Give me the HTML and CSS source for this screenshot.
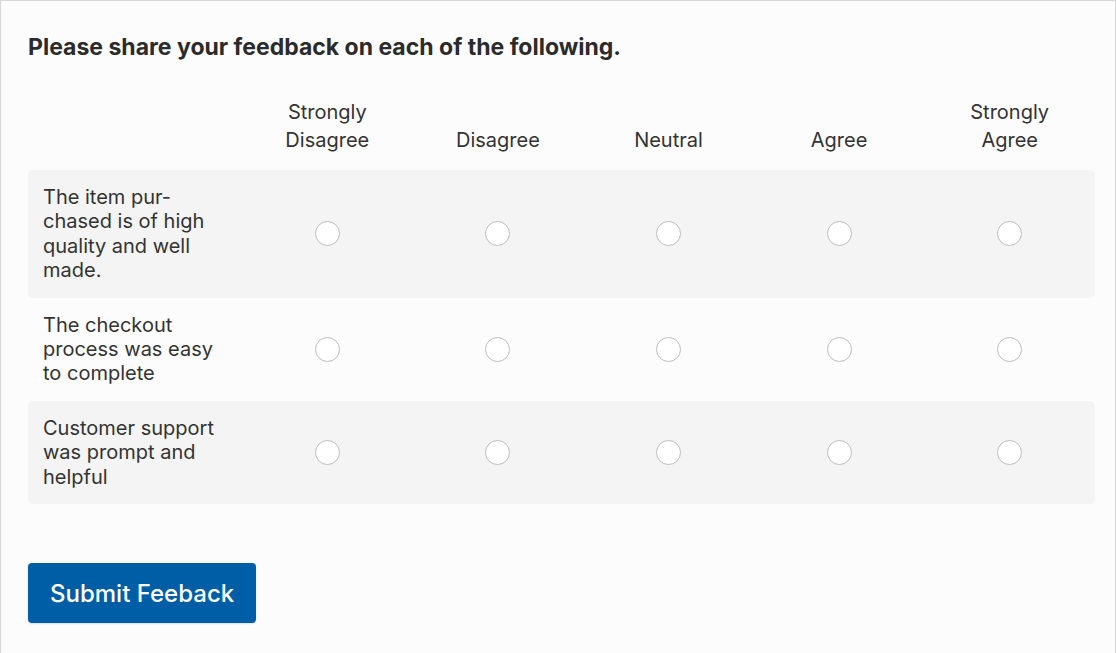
FILE: index.html
```html
<!DOCTYPE html>
<html lang="en">
<head>
<meta charset="utf-8">
<title>Feedback</title>
<link rel="stylesheet" href="styles.css">
</head>
<body>
<main class="page">
  <form class="survey">
    <h1 class="title">Please share your feedback on each of the following.</h1>
    <div class="matrix">
      <div class="head-cell head-empty"></div>
      <div class="head-cell">Strongly<br>Disagree</div>
      <div class="head-cell">Disagree</div>
      <div class="head-cell">Neutral</div>
      <div class="head-cell">Agree</div>
      <div class="head-cell">Strongly<br>Agree</div>

      <div class="row shaded">
        <div class="label">The item pur&shy;chased is of high quality and well made.</div>
        <div class="opt"><input type="radio" name="q1" class="radio"></div>
        <div class="opt"><input type="radio" name="q1" class="radio"></div>
        <div class="opt"><input type="radio" name="q1" class="radio"></div>
        <div class="opt"><input type="radio" name="q1" class="radio"></div>
        <div class="opt"><input type="radio" name="q1" class="radio"></div>
      </div>

      <div class="row">
        <div class="label">The checkout process was easy to complete</div>
        <div class="opt"><input type="radio" name="q2" class="radio"></div>
        <div class="opt"><input type="radio" name="q2" class="radio"></div>
        <div class="opt"><input type="radio" name="q2" class="radio"></div>
        <div class="opt"><input type="radio" name="q2" class="radio"></div>
        <div class="opt"><input type="radio" name="q2" class="radio"></div>
      </div>

      <div class="row shaded">
        <div class="label">Customer support was prompt and helpful</div>
        <div class="opt"><input type="radio" name="q3" class="radio"></div>
        <div class="opt"><input type="radio" name="q3" class="radio"></div>
        <div class="opt"><input type="radio" name="q3" class="radio"></div>
        <div class="opt"><input type="radio" name="q3" class="radio"></div>
        <div class="opt"><input type="radio" name="q3" class="radio"></div>
      </div>
    </div>
    <button type="button" class="submit">Submit Feeback</button>
  </form>
</main>
</body>
</html>
```

FILE: styles.css
```css
html, body {
  margin: 0;
  padding: 0;
  height: 100%;
  background: #fcfcfc;
}

body {
  font-family: Inter, "Liberation Sans", sans-serif;
  color: #333;
}

.page {
  box-sizing: border-box;
  min-height: 100%;
  border: 1px solid #d6d6d6;
  border-bottom: none;
  padding: 32px 20px 0 27px;
  background: #fcfcfc;
}

.survey {
  display: flex;
  flex-direction: column;
  align-items: flex-start;
}

.title {
  margin: 0;
  font-size: 23px;
  line-height: 28px;
  font-weight: 700;
  color: #2b2b2b;
}

.matrix {
  align-self: stretch;
  margin-top: 37px;
  display: grid;
  grid-template-columns: 214px repeat(5, 1fr);
  grid-auto-rows: auto;
}

.head-cell {
  display: flex;
  align-items: flex-end;
  justify-content: center;
  text-align: center;
  font-size: 20px;
  line-height: 28px;
  color: #333;
  padding-bottom: 16px;
}

.row {
  grid-column: 1 / -1;
  display: grid;
  grid-template-columns: subgrid;
  border-radius: 5px;
}

.row.shaded {
  background: #f4f4f4;
}

.label {
  padding: 15px 22px 15px 15px;
  font-size: 20px;
  line-height: 24.4px;
  color: #333;
}

.opt {
  display: flex;
  align-items: center;
  justify-content: center;
}

.radio {
  appearance: none;
  -webkit-appearance: none;
  margin: 0;
  width: 25px;
  height: 25px;
  border-radius: 50%;
  border: 1.5px solid #bdbdbd;
  background: #fff;
  box-sizing: border-box;
}

.submit {
  margin-top: 59px;
  height: 60px;
  padding: 0 22px;
  border: none;
  border-radius: 4px;
  background: #005ea6;
  color: #fff;
  font-family: Inter, "Liberation Sans", sans-serif;
  font-size: 24px;
  font-weight: 500;
  box-shadow: 0 1px 2px rgba(0, 0, 0, 0.12);
}
```
